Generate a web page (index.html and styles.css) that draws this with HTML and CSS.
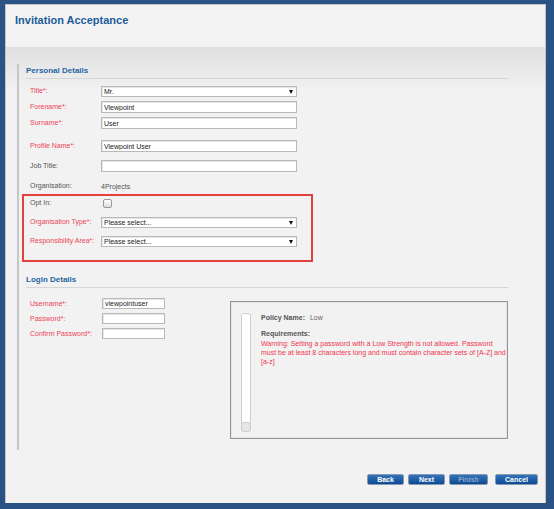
FILE: index.html
```html
<!DOCTYPE html>
<html lang="en">

<head>
    <meta charset="UTF-8"/>
    <title>Invitation Acceptance</title>
    <link rel="stylesheet" href="styles.css">
</head>

<body>
<div class="window">
    <div class="header">
        <h1>Invitation Acceptance</h1>
    </div>
    <div class="body">
        <form action="" class="form">
            <h2>Personal Details</h2>
            <div class="rows">
                <div class="row">
                    <label class="req">Title*:</label>
                    <div class="select-wrap">
                        <select class="field">
                            <option>Mr.</option>
                        </select>
                    </div>
                </div>
                <div class="row">
                    <label class="req">Forename*:</label>
                    <input type="text" class="field" value="Viewpoint"/>
                </div>
                <div class="row">
                    <label class="req">Surname*:</label>
                    <input type="text" class="field" value="User"/>
                </div>
                <div class="row profile">
                    <label class="req">Profile Name*:</label>
                    <input type="text" class="field" value="Viewpoint User"/>
                </div>
                <div class="row spaced">
                    <label>Job Title:</label>
                    <input type="text" class="field" value=""/>
                </div>
                <div class="row spaced">
                    <label>Organisation:</label>
                    <span class="value">4Projects</span>
                </div>
            </div>

            <div class="highlight">
                <div class="row opt">
                    <label>Opt In:</label>
                    <input type="checkbox" class="check"/>
                </div>
                <div class="row">
                    <label class="req">Organisation Type*:</label>
                    <div class="select-wrap">
                        <select class="field">
                            <option>Please select...</option>
                        </select>
                    </div>
                </div>
                <div class="row">
                    <label class="req">Responsibility Area*:</label>
                    <div class="select-wrap">
                        <select class="field">
                            <option>Please select...</option>
                        </select>
                    </div>
                </div>
            </div>

            <h2 class="login-title">Login Details</h2>
            <div class="login">
                <div class="login-rows">
                    <div class="row small">
                        <label class="req">Username*:</label>
                        <input type="text" class="field short" value="viewpointuser"/>
                    </div>
                    <div class="row small">
                        <label class="req">Password*:</label>
                        <input type="password" class="field short" value=""/>
                    </div>
                    <div class="row small">
                        <label class="req">Confirm Password*:</label>
                        <input type="password" class="field short" value=""/>
                    </div>
                </div>
                <div class="policy">
                    <div class="meter">
                        <div class="meter-knob"></div>
                    </div>
                    <div class="policy-text">
                        <p class="policy-name"><b>Policy Name:</b> <span>Low</span></p>
                        <p class="req-title"><b>Requirements:</b></p>
                        <p class="warning">Warning: Setting a password with a Low Strength is not allowed. Password<br>must be at least 8 characters long and must contain character sets of [A-Z] and<br>[a-z]</p>
                    </div>
                </div>
            </div>
        </form>

        <div class="actions">
            <button class="btn">Back</button>
            <button class="btn">Next</button>
            <button class="btn disabled">Finish</button>
            <button class="btn cancel">Cancel</button>
        </div>
    </div>
</div>
</body>

</html>
```

FILE: styles.css
```css
* {
    margin: 0;
    padding: 0;
}

body {
    background: #2b5285;
    font-family: "Liberation Sans", Arial, sans-serif;
    font-size: 7px;
    color: #555;
}

.window {
    margin: 4px 8px 0 5px;
    height: 499px;
    box-sizing: border-box;
    border: 1px solid #c4c4c4;
    box-shadow: inset 1px 1px 0 #fff;
    background: #f2f2f2;
}

.header {
    height: 42px;
    padding: 8px 0 0 9px;
    box-sizing: border-box;
    background: #f3f3f3;
}

h1 {
    font-size: 11px;
    line-height: 14px;
    color: #1d5b9a;
}

.body {
    height: 456px;
    padding: 17px 0 0 11px;
    box-sizing: border-box;
    background: linear-gradient(#e0e0e0, #f2f2f2 45px);
}

.form {
    height: 386px;
    width: 491px;
    box-sizing: border-box;
    border-left: 2px solid #c6c6c6;
    padding-left: 7px;
}

h2 {
    width: 482px;
    height: 14px;
    line-height: 14px;
    font-size: 8px;
    color: #2765a2;
    border-bottom: 1px solid #d6d6d6;
}

.rows {
    display: flex;
    flex-direction: column;
    gap: 4px;
    margin-top: 6px;
}

.row {
    display: flex;
    align-items: center;
    height: 12px;
    padding-left: 4px;
}

.row label {
    width: 71px;
    line-height: 12px;
}

.req {
    color: #ec4358;
}

.profile {
    margin-top: 7px;
}

.spaced {
    margin-top: 4px;
}

.value {
    color: #555;
}

.field {
    box-sizing: border-box;
    width: 196px;
    height: 12px;
    border: 1px solid #b9b9b9;
    box-shadow: inset 1px 1px 0 #e6e6e6;
    background: #fff;
    font-family: "Liberation Sans", Arial, sans-serif;
    font-size: 7px;
    color: #222;
    padding: 0 2px;
    outline: none;
}

select.field {
    appearance: none;
    -webkit-appearance: none;
    height: 11px;
    line-height: 9px;
    border-radius: 0;
}

.select-wrap {
    position: relative;
    width: 196px;
    height: 11px;
}

.select-wrap::after {
    content: "";
    position: absolute;
    right: 4px;
    top: 4px;
    border-left: 2.5px solid transparent;
    border-right: 2.5px solid transparent;
    border-top: 4px solid #111;
}

.highlight {
    width: 291px;
    box-sizing: border-box;
    margin: 2px 0 0 -4px;
    border: 2px solid #e2413f;
    padding: 1px 0 13px 2px;
}

.highlight .row + .row {
    margin-top: 7px;
}

.check {
    appearance: none;
    -webkit-appearance: none;
    width: 9px;
    height: 9px;
    margin-left: 2px;
    border: 1px solid #9a9a9a;
    border-radius: 2px;
    background: linear-gradient(#fff, #dcdcdc);
}

.login-title {
    margin-top: 11px;
}

.login {
    display: flex;
    margin-top: 10px;
}

.login-rows {
    width: 204px;
    display: flex;
    flex-direction: column;
    gap: 4px;
}

.small {
    height: 11px;
}

.field.short {
    width: 63px;
    height: 11px;
    margin-left: 1px;
}

.policy {
    display: flex;
    width: 278px;
    height: 138px;
    box-sizing: border-box;
    margin-top: 3px;
    border: 1px solid #959595;
    box-shadow: inset 0 0 0 1px #e4e4e4;
    padding: 11px 0 0 10px;
}

.meter {
    position: relative;
    width: 10px;
    height: 119px;
    box-sizing: border-box;
    border: 1px solid #cfcfcf;
    border-radius: 3px;
    background: #fff;
    margin-right: 10px;
}

.meter-knob {
    position: absolute;
    left: -1px;
    bottom: -1px;
    width: 10px;
    height: 10px;
    box-sizing: border-box;
    border: 1px solid #cfcfcf;
    border-radius: 3px;
    background: #e6e6e6;
}

.policy-text p {
    line-height: 10px;
    white-space: nowrap;
}

.policy-name span {
    margin-left: 3px;
    color: #666;
}

.req-title {
    margin-top: 6px;
}

.policy-text .warning {
    line-height: 9px;
    color: #f0354d;
}

.actions {
    display: flex;
    justify-content: flex-end;
    gap: 4px;
    margin-top: 24px;
    padding-right: 7px;
}

.btn {
    height: 11px;
    width: 37px;
    box-sizing: border-box;
    border: 1px solid #8799b0;
    border-radius: 2px;
    background: linear-gradient(#3472ba, #0d4b92);
    color: #fff;
    font-family: "Liberation Sans", Arial, sans-serif;
    font-size: 7px;
    font-weight: bold;
    line-height: 9px;
    cursor: pointer;
}

.btn.disabled {
    width: 39px;
    color: #8aa5c6;
}

.btn.cancel {
    width: 43px;
    margin-left: 3px;
}
```
